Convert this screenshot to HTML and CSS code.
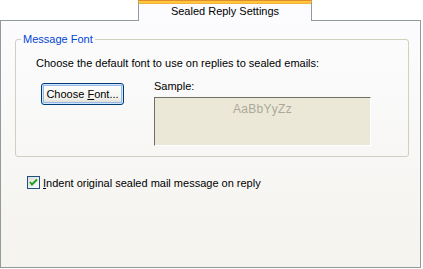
FILE: index.html
```html
<!DOCTYPE html>
<html lang="en">
<head>
    <meta charset="UTF-8">
    <title>Sealed Reply Settings</title>
    <link rel="stylesheet" href="styles.css">
</head>
<body>
<div class="dlg">
    <div class="tabs">
        <div class="tab">Sealed Reply Settings</div>
    </div>
    <div class="panel">
        <fieldset class="group">
            <legend>Message Font</legend>
            <p class="intro">Choose the default font to use on replies to sealed emails:</p>
            <div class="fontrow">
                <button class="btn">Choose <u>F</u>ont...</button>
                <div class="sample">
                    <div class="sample-lbl">Sample:</div>
                    <div class="sample-box">AaBbYyZz</div>
                </div>
            </div>
        </fieldset>
        <label class="chk">
            <span class="box">
                <svg width="9" height="9" viewBox="0 0 9 9"><path d="M1 4 L3 6.5 L8 1.5" fill="none" stroke="#21a121" stroke-width="2"/></svg>
            </span>
            <span><u>I</u>ndent original sealed mail message on reply</span>
        </label>
    </div>
</div>
</body>
</html>
```

FILE: styles.css
```css
* { margin: 0; padding: 0; box-sizing: border-box; }
body { margin: 0; background: #fff; font-family: "Liberation Sans", Arial, sans-serif; font-size: 11px; color: #000; }

.dlg { width: 421px; }
.tabs { display: flex; padding-left: 138px; }
.tab { position: relative; z-index: 1; width: 174px; height: 21px; margin-bottom: -1px; background: #fcfcfe;
       border-left: 1px solid #919b9c; border-right: 1px solid #919b9c; border-top: 3px solid #ffc83c;
       box-shadow: inset 0 1px 0 #f5b040; text-align: center; line-height: 15px; padding-top: 1px; }
.tab::before { content: ""; position: absolute; left: -1px; right: -1px; top: -3px; height: 1px; background: #e68b2c; }

.panel { height: 248px; border: 1px solid #919b9c; background: linear-gradient(#fcfcfe, #f4f3ee);
         padding: 12px 11px 0 14px; }

.group { border: 1px solid #d0d0bf; border-radius: 3px; height: 124px; padding: 0 0 0 20px; }
.group legend { color: #0046d5; margin-left: -15px; padding: 0 2px; line-height: 13px; }
.intro { margin-top: 11px; line-height: 13px; }

.fontrow { display: flex; margin-top: 8px; }
.btn { width: 83px; height: 22px; margin-left: 5px; margin-top: 5px; font: inherit; color: #000;
       border: 1px solid #003c74; border-radius: 3px;
       background: linear-gradient(#ffffff, #f3f3ef 70%, #d9d5c8);
       box-shadow: inset 0 0 0 1px #cee7ff, inset 0 0 0 2px #98b8ea; }

.sample { margin-left: 30px; margin-top: 2px; }
.sample-lbl { line-height: 13px; margin-bottom: 4px; }
.sample-box { width: 217px; height: 49px; background: #ebe8d8; color: #aca899; text-align: center;
              border-top: 1px solid #716f64; border-left: 1px solid #716f64; border-right: 1px solid #fff; border-bottom: 1px solid #fff;
              font-size: 12px; padding-top: 4px; letter-spacing: 0.3px; }

.chk { display: flex; align-items: center; gap: 3px; margin: 19px 0 0 12px; }
.chk .box { width: 13px; height: 13px; border: 1px solid #1c5180; background: linear-gradient(135deg, #dcdcd7, #fff);
            display: flex; align-items: center; justify-content: center; }
```
